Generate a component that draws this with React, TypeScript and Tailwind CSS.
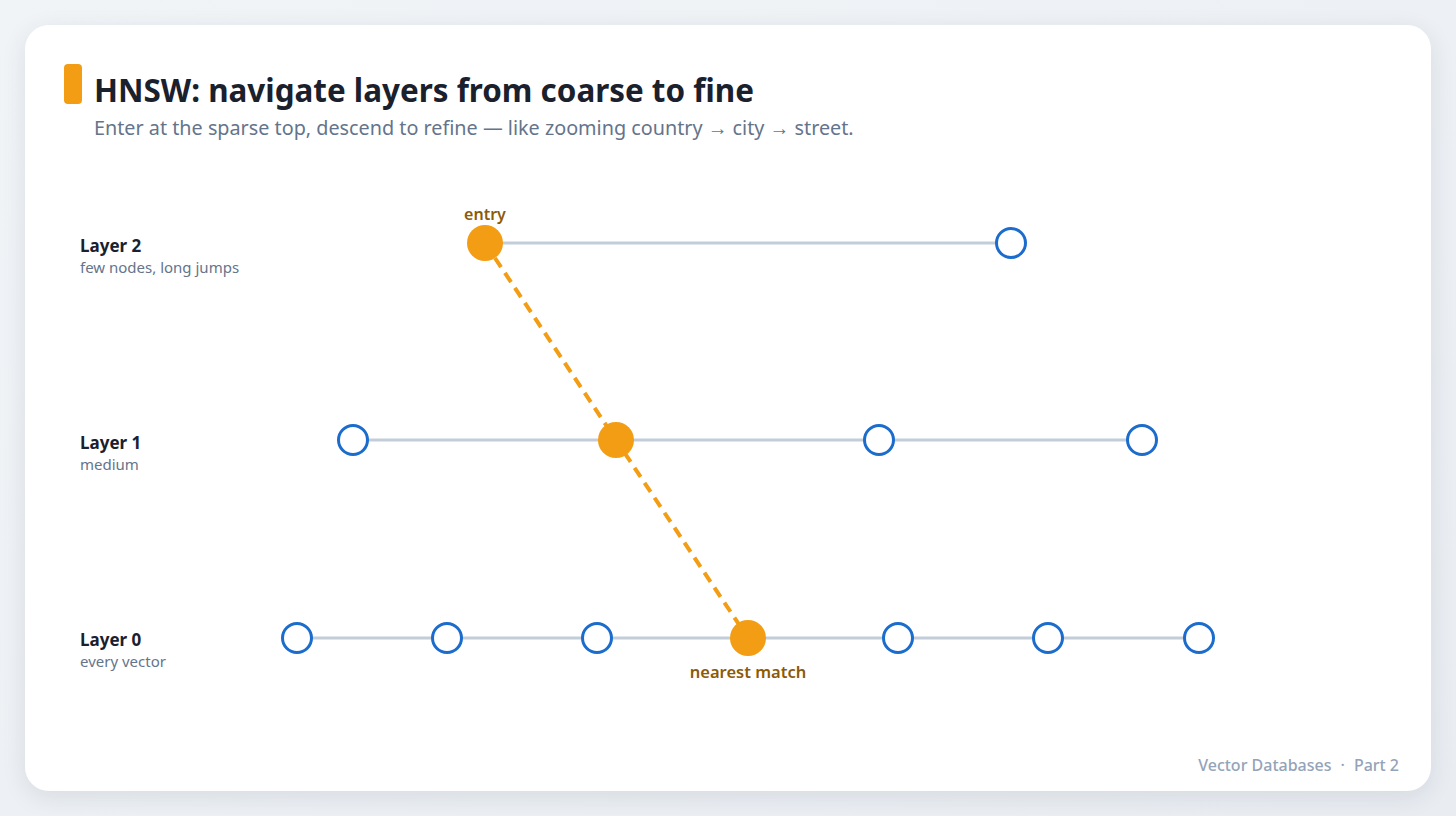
import React from "react"

const font = { fontFamily: '"Noto Sans", "Open Sans", sans-serif' }

interface Layer {
  name: string
  note: string
}

const layers: Layer[] = [
  { name: "Layer 2", note: "few nodes, long jumps" },
  { name: "Layer 1", note: "medium" },
  { name: "Layer 0", note: "every vector" },
]

// svg origin sits at page (250, 190)
const ROW_Y = [53, 250, 448]
const rows = [
  { xs: [235, 761], hit: 0 },
  { xs: [103, 366, 629, 892], hit: 1 },
  { xs: [47, 197, 347, 498, 648, 798, 949], hit: 3 },
]

function Diagram() {
  const path = rows.map((r, i) => `${r.xs[r.hit]},${ROW_Y[i]}`).join(" ")
  return (
    <svg width="1000" height="500" viewBox="0 0 1000 500" className="block shrink-0">
      {rows.map((r, i) => (
        <line
          key={"l" + i}
          x1={r.xs[0]}
          y1={ROW_Y[i]}
          x2={r.xs[r.xs.length - 1]}
          y2={ROW_Y[i]}
          stroke="#c3cdd9"
          strokeWidth="3"
        />
      ))}
      <polyline points={path} fill="none" stroke="#f29d13" strokeWidth="4" strokeDasharray="11 7" />
      {rows.map((r, i) =>
        r.xs.map((x, j) =>
          j === r.hit ? (
            <circle key={`n${i}-${j}`} cx={x} cy={ROW_Y[i]} r="18" fill="#f29d13" />
          ) : (
            <circle key={`n${i}-${j}`} cx={x} cy={ROW_Y[i]} r="14.5" fill="#ffffff" stroke="#1b6ccc" strokeWidth="3" />
          ),
        ),
      )}
      <text x="235" y="30" textAnchor="middle" fontSize="16" fontWeight="600" fill="#8d5a06" style={font}>
        entry
      </text>
      <text x="498" y="488" textAnchor="middle" fontSize="16.5" fontWeight="600" fill="#8d5a06" style={font}>
        nearest match
      </text>
    </svg>
  )
}

export default function App() {
  return (
    <div className="w-full h-[816px] p-[25px] bg-gradient-to-br from-[#f1f4f7] to-[#e9edf2]" style={font}>
      <div className="h-full rounded-[24px] bg-white shadow-[0_6px_24px_rgba(30,41,59,0.10)] flex flex-col pt-[39px] px-[39px] pb-[16px]">
        <div className="flex items-start gap-[12px]">
          <div className="w-[18px] h-[40px] rounded-[4px] bg-[#f29d13] shrink-0" />
          <div className="flex flex-col">
            <div className="mt-[6px] text-[31.4px] leading-[40px] font-bold text-[#1a202c]">HNSW: navigate layers from coarse to fine</div>
            <div className="mt-[4px] text-[19.8px] leading-[28px] text-[#64748b]">
              Enter at the sparse top, descend to refine — like zooming country → city → street.
            </div>
          </div>
        </div>

        <div className="flex mt-[48px] ml-[16px] h-[500px]">
          <div className="w-[170px] shrink-0 flex flex-col pt-[45px] gap-[153px]">
            {layers.map((l) => (
              <div key={l.name} className="h-[44px]">
                <div className="text-[17px] leading-[22px] font-bold text-[#1a202c]">{l.name}</div>
                <div className="text-[15px] leading-[20px] text-[#64748b]">{l.note}</div>
              </div>
            ))}
          </div>
          <Diagram />
        </div>

        <div className="mt-auto flex justify-end mr-[-7px] text-[16px] leading-[20px] text-[#94a3b8] font-medium">
          <span>Vector Databases</span>
          <span className="mx-[9px]">·</span>
          <span>Part 2</span>
        </div>
      </div>
    </div>
  )
}
